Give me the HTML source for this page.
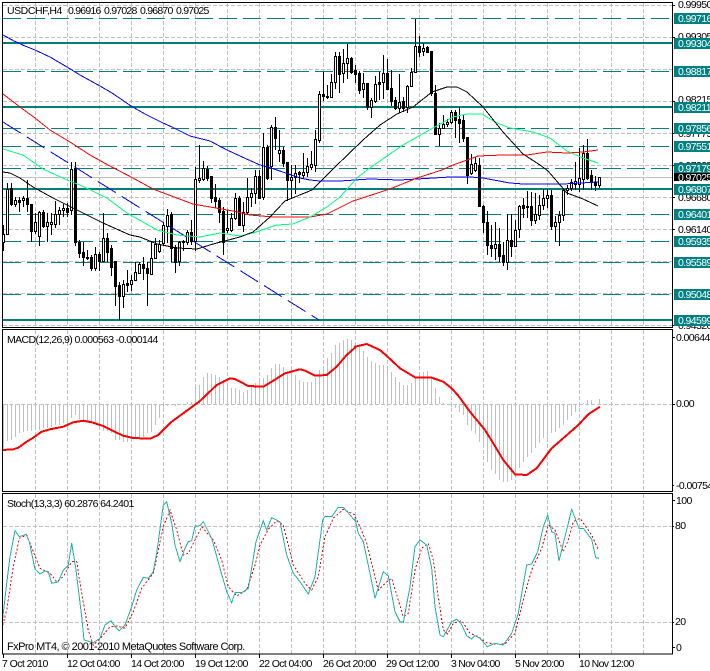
<!DOCTYPE html>
<html><head><meta charset="utf-8"><title>USDCHF,H4</title>
<style>
html,body{margin:0;padding:0;background:#fff;width:710px;height:671px;overflow:hidden}
svg{display:block;position:absolute;left:0;top:0}
text{font-family:"Liberation Sans",sans-serif;font-size:10.5px;fill:#000;letter-spacing:-.3px}
.w{fill:#fff;letter-spacing:-.6px}
.a{letter-spacing:-.6px}
</style></head><body>
<svg id="s" width="710" height="671" viewBox="0 0 710 671" xmlns="http://www.w3.org/2000/svg">
<g id="grid" shape-rendering="crispEdges"></g>
<g id="main" shape-rendering="crispEdges"></g>
<g id="ind" shape-rendering="crispEdges"></g>
<g fill="none" stroke="#000" shape-rendering="crispEdges">
<path d="M2.5 2.5H672.5V327.5H2.5ZM2.5 329.5H672.5V491.5H2.5ZM2.5 493.5H672.5V654H2.5Z"/>
<path d="M3.5 654v4M67.5 654v4M131.5 654v4M195.5 654v4M259.5 654v4M323.5 654v4M387.5 654v4M451.5 654v4M515.5 654v4M579.5 654v4M672 5.5h3M672 37.5h3M672 101.5h3M672 133.5h3M672 165.5h3M672 197.5h3M672 229.5h3M672 325.5h3M672 337.5h3M672 404.5h3M672 485.5h2M672 500.5h3M672 526.5h2M672 622.5h2M672 647.5h3"/>
</g>
<g id="ax"></g>
<g>
<text class="a" x="678" y="8">0.99950</text>
<text class="a" x="678" y="40">0.99305</text>
<text class="a" x="678" y="103">0.98215</text>
<text class="a" x="678" y="137">0.97775</text>
<text class="a" x="678" y="169">0.97335</text>
<text class="a" x="678" y="201">0.96680</text>
<text class="a" x="678" y="233">0.96140</text>
<text class="a" x="678" y="329">0.94320</text>
</g>
<g shape-rendering="crispEdges" fill="#008080">
<rect x="674" y="13" width="36" height="11"/><rect x="674" y="38" width="36" height="11"/><rect x="674" y="66" width="36" height="11"/><rect x="674" y="102" width="36" height="11"/><rect x="674" y="123" width="36" height="11"/><rect x="674" y="141" width="36" height="11"/><rect x="674" y="163" width="36" height="11"/><rect x="674" y="184" width="36" height="11"/><rect x="674" y="209" width="36" height="11"/><rect x="674" y="236" width="36" height="11"/><rect x="674" y="257" width="36" height="11"/><rect x="674" y="289" width="36" height="11"/><rect x="674" y="315" width="36" height="11"/>
<rect x="674" y="173" width="36" height="8" fill="#000"/>
</g>
<g>
<text class="w" x="678" y="22">0.99716</text>
<text class="w" x="678" y="47">0.99304</text>
<text class="w" x="678" y="75">0.98817</text>
<text class="w" x="678" y="111">0.98211</text>
<text class="w" x="678" y="132">0.97856</text>
<text class="w" x="678" y="150">0.97551</text>
<text class="w" x="678" y="172">0.97179</text>
<text class="w" x="678" y="181">0.97025</text>
<text class="w" x="678" y="193">0.96807</text>
<text class="w" x="678" y="218">0.96401</text>
<text class="w" x="678" y="245">0.95935</text>
<text class="w" x="678" y="266">0.95589</text>
<text class="w" x="678" y="298">0.95048</text>
<text class="w" x="678" y="324">0.94599</text>
<text class="a" x="676" y="341">0.00644</text>
<text class="a" x="676" y="407">0.00</text>
<text class="a" x="676" y="489">-0.00754</text>
<text class="a" x="676" y="504">100</text>
<text class="a" x="675" y="529">80</text>
<text class="a" x="675" y="625">20</text>
<text class="a" x="676" y="651">0</text>
<text x="7" y="14" textLength="55">USDCHF,H4</text>
<text x="68" y="14" textLength="33">0.96916</text>
<text x="104" y="14" textLength="33">0.97028</text>
<text x="140" y="14" textLength="33">0.96870</text>
<text x="176" y="14" textLength="33">0.97025</text>
<text x="7" y="343" textLength="151">MACD(12,26,9) 0.000563 -0.000144</text>
<text x="7" y="507" textLength="127">Stoch(13,3,3) 60.2876 64.2401</text>
<text x="7" y="650" textLength="238" style="font-size:11px">FxPro MT4, © 2001-2010 MetaQuotes Software Corp.</text>
<text x="2" y="667" textLength="46">7 Oct 2010</text>
<text x="67" y="667" textLength="53">12 Oct 04:00</text>
<text x="131" y="667" textLength="53">14 Oct 20:00</text>
<text x="195" y="667" textLength="53">19 Oct 12:00</text>
<text x="259" y="667" textLength="53">22 Oct 04:00</text>
<text x="323" y="667" textLength="53">26 Oct 20:00</text>
<text x="386" y="667" textLength="53">29 Oct 12:00</text>
<text x="451" y="667" textLength="49">3 Nov 04:00</text>
<text x="515" y="667" textLength="49">5 Nov 20:00</text>
<text x="579" y="667" textLength="55">10 Nov 12:00</text>
</g>
</svg>
<script>
var C="225 251 234 242 1|183 235 189 234 1|183 206 188 204 0|197 207 200 204 1|197 212 200 202 0|196 207 198 200 1|180 212 198 204 0|204 242 204 231 0|213 234 222 231 1|211 246 212 236 1|210 228 212 226 0|213 242 222 226 1|213 235 222 224 1|201 228 214 224 1|207 225 210 214 1|204 217 208 210 1|203 217 208 212 0|162 215 169 210 1|162 246 168 242 0|240 258 242 253 0|242 266 252 257 0|250 260 257 258 0|255 271 257 268 0|247 271 254 268 1|252 271 254 261 0|213 262 238 261 1|233 262 238 252 0|245 276 248 267 0|261 306 261 286 0|282 320 285 296 0|280 308 284 296 1|270 292 283 285 0|275 291 280 284 1|262 281 272 280 1|262 274 264 273 1|257 280 264 268 0|262 306 268 273 0|241 275 258 274 1|238 258 244 258 1|240 253 244 251 1|222 246 225 243 1|209 243 215 226 1|212 262 214 248 0|245 273 247 262 0|241 266 242 261 1|240 251 241 242 1|230 245 232 242 1|220 245 232 241 0|167 251 179 241 1|145 183 178 180 1|161 181 168 179 1|166 181 169 178 0|176 203 176 198 0|184 208 197 201 0|198 223 200 212 0|207 255 211 242 0|210 233 228 230 1|213 232 218 230 1|193 220 198 218 1|196 226 198 225 0|202 232 212 225 1|178 215 197 212 1|188 207 193 197 1|170 204 176 193 1|170 198 176 198 0|133 200 147 197 1|145 180 147 178 0|125 180 127 166 1|117 150 127 138 0|130 162 150 153 1|147 167 150 163 0|162 201 162 180 0|165 198 177 180 1|165 194 173 177 1|171 183 172 174 0|153 179 172 175 1|158 177 166 172 1|151 170 164 167 1|130 172 139 165 1|91 143 94 140 1|72 101 94 96 0|85 99 96 97 0|74 98 82 97 1|52 89 56 82 1|52 93 56 74 0|49 83 63 73 1|44 79 58 63 1|57 74 58 72 0|65 83 70 74 0|71 94 73 90 0|73 98 83 89 1|83 110 83 107 0|98 118 100 107 1|76 103 84 101 1|72 100 82 84 0|55 99 73 82 1|59 90 73 89 0|70 106 88 101 0|97 110 100 108 0|74 113 102 108 1|97 112 101 108 0|85 113 86 107 1|68 87 72 86 1|19 73 46 72 1|36 57 46 52 0|43 56 48 51 1|46 52 47 52 0|51 96 51 93 0|85 135 93 134 0|123 146 128 134 1|115 129 124 128 1|119 127 122 124 1|110 124 112 122 1|110 138 112 120 0|107 143 119 123 0|115 142 120 138 0|137 184 137 175 0|154 175 164 173 1|157 172 163 170 1|158 206 165 206 0|205 233 206 222 0|211 255 222 245 0|225 257 245 248 0|222 260 244 248 1|228 262 244 256 0|242 266 255 262 0|214 270 240 262 1|214 257 240 246 0|220 246 230 246 1|205 238 206 229 1|198 218 205 208 0|191 218 206 207 0|192 226 206 220 0|193 224 214 220 1|195 220 205 215 1|189 210 198 205 1|189 208 195 198 1|190 230 195 226 0|216 242 222 226 1|211 246 215 222 1|190 221 190 215 1|185 195 188 190 1|179 191 182 188 1|162 190 181 184 1|148 192 178 184 1|145 190 153 179 1|139 180 153 178 0|170 190 175 182 0|176 191 182 185 0|177 188 177 185 1".split("|").map(function(r){return r.split(" ").map(Number)});
var H1="375 348 345 335 325 320 318 318 315 315 310 310 305 300 300 295 285 280 270 283 290 290 295 298 310 318 318 325 345 345 350 352 345 340 340 335 325 320 300 280 262 242 240 242 238 238 232 232 180 180 155 143 147 150 155 165 175 190 190 195 200 195 185 175 170 160 150 130 118 118 125 140 145 150 165 170 172 172 160 135 125 100 85 60 55 45 42 45".split(" ").map(Number);
var H2="70 62 78 95 108 115 120 120 128 140 157 170 180 180 175 155 145 140 138 160 190 215 235 240 245 250 260 270 300 318 328 352 370 410 435 448 465 472 470 465 450 430 410 395 385 370 355 340 340 325 320 310 300 285 272 262 245 235 225 225 238 222".split(" ").map(Number);
function z(a,ox,oy){var o=[];for(var i=0;i<a.length;i+=2)o.push((ox+a[i]/3).toFixed(1)+","+(oy+a[i+1]/3).toFixed(1));return o.join(" ")}
function pl(p,c,w,d){return '<polyline fill="none" stroke="'+c+'" stroke-width="'+w+'" points="'+p+'"'+(d?' stroke-dasharray="'+d+'"':'')+'/>'}
var g="",i;
/* grid */
var gd="";
for(i=0;i<20;i++){var x=35.5+32*i;gd+="M"+x+" 3V327M"+x+" 330V491M"+x+" 494V654"}
[5,37,69,101,133,165,197,229,261,293,325].forEach(function(y){gd+="M3 "+(y+.5)+"H672"});
gd+="M3 404.5H672M3 526.5H672M3 622.5H672";
g='<path d="'+gd+'" fill="none" stroke="#c0c0c0" stroke-dasharray="4 2"/><path d="M3 177.5H672" stroke="#c0c0c0" fill="none"/>';
[18,71,128,146,168,214,241,262,294].forEach(function(y){g+='<path d="M3 '+(y+.5)+'H672" stroke="#008080" stroke-dasharray="18 6"/>'});
[43,107,189,320].forEach(function(y){g+='<rect x="3" y="'+(y-1)+'" width="669" height="2" fill="#008078"/>'});
document.getElementById("grid").innerHTML=g;
/* candles */
var m="",wp="";
C.forEach(function(c,i){var x=3.5+4*i;wp+="M"+x+" "+c[0]+"V"+c[1]});
m='<path d="'+wp+'" stroke="#000" fill="none"/>';
C.forEach(function(c,i){var x=3.5+4*i;
 if(c[4])m+='<rect x="'+(x-1)+'" y="'+(c[2]+.5)+'" width="2" height="'+Math.max(1,c[3]-c[2])+'" fill="#fff" stroke="#000"/>';
 else m+='<rect x="'+(x-1.5)+'" y="'+c[2]+'" width="3" height="'+Math.max(1,c[3]-c[2]+1)+'" fill="#000"/>';});
function P(a){return a.join(" ")}
m+=pl(P(["3,122","319,320"]),"#0000ff",1,"21 7");
m+=pl(P(["3,35","14,41","25,46","35,50","50,57","67,67","80,75","100,86","112,93","131,106","145,114","163,123","172,127","190,136","210,141","227,150","240,156","260,165","268,167","280,171","300,178","310,180","320,181","340,181","370,179","400,180","417,179","450,177","470,177","483,178","510,183","523,184","563,184","598,182"]),"#0000ff",1);
m+=pl(P(["3,94","20,107","35,118","50,130","70,142","90,155","108,165","133,178","153,189","193,204","233,211","250,215","273,217","310,217","327,214","353,201","390,189","417,178","442,170","453,165","470,159","478,156","503,155","527,155","547,152","567,153","583,152","598,150"]),"#ff0000",1);
m+=pl(P(["3,149","23,155","43,169","67,180","80,185","107,198","127,213","157,230","177,235","200,237","220,233","240,236","253,233","277,225","293,224","310,217","327,207","340,197","357,178","367,170","403,145","433,128","453,117","467,114","482,114","495,122","510,128","533,132","550,138","567,151","583,158","598,163"]),"#00ff7f",1);
m+=pl(P(["3,172","10,173","20,178","33,187","53,198","77,210","103,223","130,235","140,237","157,244","177,248","197,249","213,244","240,237","253,232","270,217","285,201","312,190","334,168","363,140","380,125","397,114","413,107","432,92","447,87","457,87","467,92","483,107","503,132","523,154","540,165","548,171","567,193","583,199","598,206"]),"#000",1);
document.getElementById("main").innerHTML=m;
/* MACD hist */
var hp="";
H1.concat(H2).forEach(function(v,i){var x=3.5+4*i;hp+="M"+x+" 404V"+(325+v/3).toFixed(0)});
var d='<path d="'+hp+'" stroke="#c0c0c0" fill="none"/>';
var m1=[8,375,40,373,55,368,80,350,100,338,125,320,150,313,190,305,220,292,250,287,275,292,310,303,350,323,370,332,400,339,450,341,475,330,515,290,550,265,600,228,650,180,690,160,705,162,745,183,790,185,815,170,855,145,900,133,915,137,945,152,980,150,1010,125,1040,90,1065,68];
var m2=[0,65,35,57,75,75,100,97,135,130,180,157,230,158,265,170,290,190,310,212,345,260,390,315,415,355,445,405,480,448,515,450,545,430,590,370,630,335,670,300,700,268,735,245];
d+=pl(z(m1,0,325)+" "+z(m2,355,325),"#ff0000",2);
/* stoch */
var s1=[8,385,20,280,30,200,45,122,58,140,78,133,88,155,105,238,120,252,135,243,145,245,155,280,175,276,190,240,205,225,215,160,228,240,245,380,252,450,280,458,300,445,315,405,333,392,345,410,358,423,375,405,395,350,410,300,430,262,445,265,460,245,470,190,490,45,500,35,515,100,525,165,540,215,555,175,565,155,575,152,585,108,600,107,610,95,635,145,660,235,680,305,695,338,705,308,725,308,745,295,768,155,790,92,800,120,815,83,840,95,860,195,880,250,900,275,925,312,945,260,968,90,975,80,995,80,1015,52,1030,52,1065,92];
var s2=[0,85,10,130,25,155,45,250,60,325,85,245,100,258,120,365,135,395,145,397,165,290,180,170,195,150,215,165,230,235,240,350,255,435,265,440,290,395,305,388,318,400,335,437,350,447,360,437,375,445,397,470,420,460,445,465,470,430,490,370,515,225,530,222,548,185,565,110,578,75,590,125,600,130,612,213,650,58,672,115,685,115,710,148,722,203,732,205];
var r1=[8,405,20,360,40,230,58,145,80,135,100,185,120,235,150,250,170,275,190,260,215,215,230,215,245,310,265,420,280,465,310,435,330,410,350,408,375,415,400,365,425,295,460,250,490,110,510,60,530,120,550,195,565,190,585,150,605,110,640,150,665,210,685,290,710,318,740,300,765,225,780,165,805,118,830,92,850,105,880,225,915,280,935,300,955,260,975,140,1000,85,1030,58,1065,75];
var r2=[0,80,15,110,35,160,55,240,70,300,90,280,110,265,130,330,145,380,160,370,180,240,200,175,220,160,235,210,250,320,265,420,278,432,295,400,320,392,345,430,370,440,395,458,420,462,450,462,480,430,510,310,530,240,560,175,580,105,600,120,625,185,640,150,655,95,675,85,710,135,730,180];
d+=pl(z(r1,0,490)+" "+z(r2,355,490),"#ff0000",1,"2 2");
d+=pl(z(s1,0,490)+" "+z(s2,355,490),"#20b2aa",1);
document.getElementById("ind").innerHTML=d;
</script>
</body></html>
